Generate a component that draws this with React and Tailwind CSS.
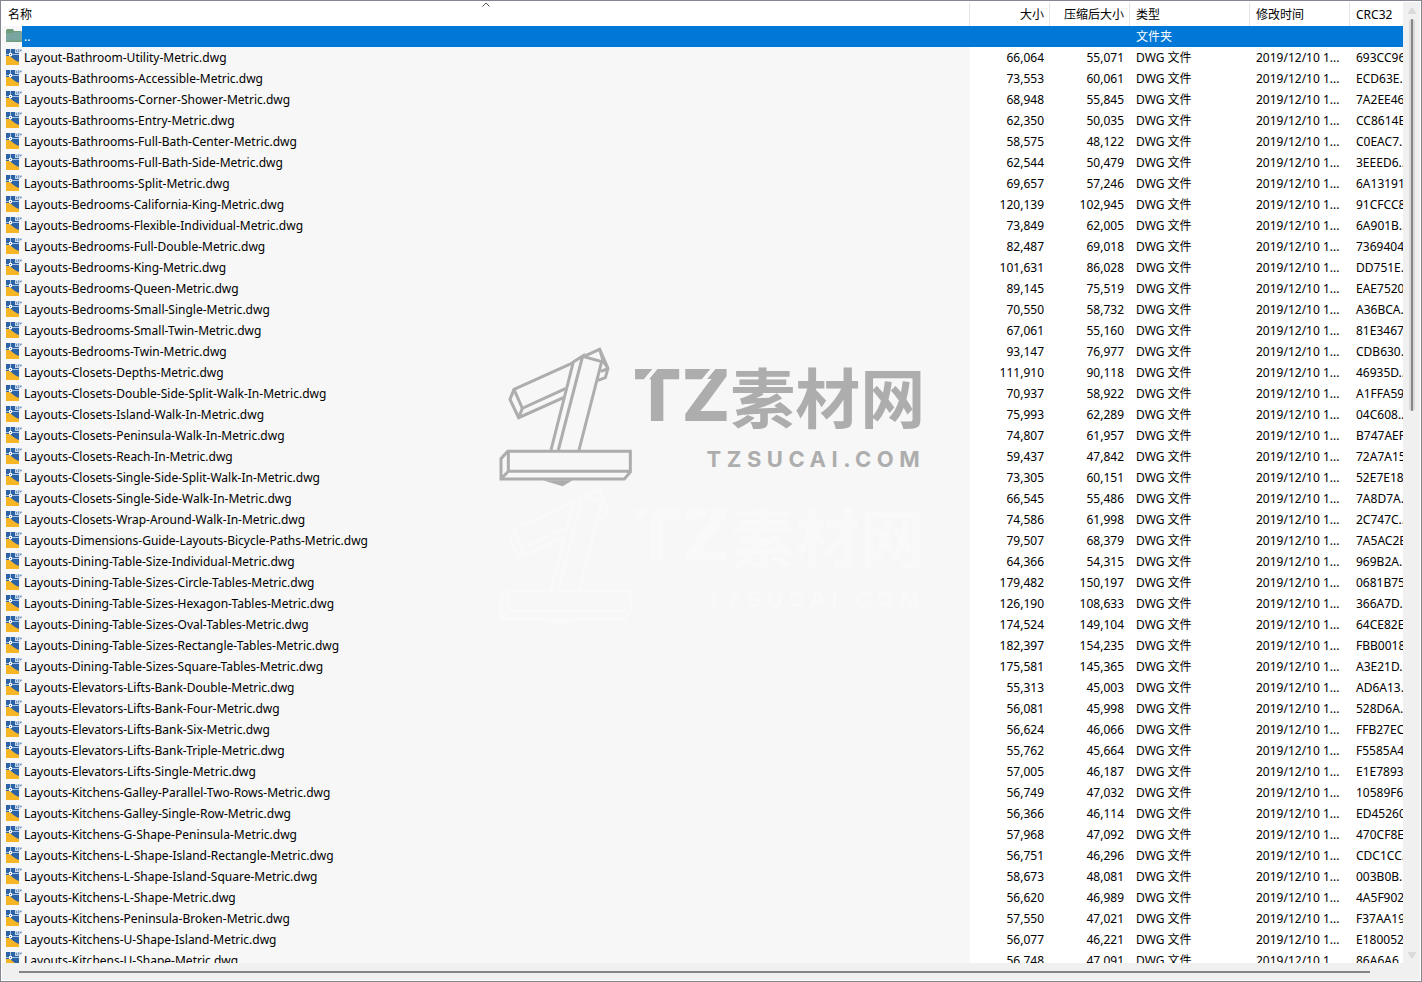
import React from 'react';

const files = [
    ['Layout-Bathroom-Utility-Metric.dwg', '66,064', '55,071', '693CC96...'],
    ['Layouts-Bathrooms-Accessible-Metric.dwg', '73,553', '60,061', 'ECD63E...'],
    ['Layouts-Bathrooms-Corner-Shower-Metric.dwg', '68,948', '55,845', '7A2EE46...'],
    ['Layouts-Bathrooms-Entry-Metric.dwg', '62,350', '50,035', 'CC8614E...'],
    ['Layouts-Bathrooms-Full-Bath-Center-Metric.dwg', '58,575', '48,122', 'C0EAC7...'],
    ['Layouts-Bathrooms-Full-Bath-Side-Metric.dwg', '62,544', '50,479', '3EEED6...'],
    ['Layouts-Bathrooms-Split-Metric.dwg', '69,657', '57,246', '6A13191...'],
    ['Layouts-Bedrooms-California-King-Metric.dwg', '120,139', '102,945', '91CFCC8...'],
    ['Layouts-Bedrooms-Flexible-Individual-Metric.dwg', '73,849', '62,005', '6A901B...'],
    ['Layouts-Bedrooms-Full-Double-Metric.dwg', '82,487', '69,018', '7369404...'],
    ['Layouts-Bedrooms-King-Metric.dwg', '101,631', '86,028', 'DD751E...'],
    ['Layouts-Bedrooms-Queen-Metric.dwg', '89,145', '75,519', 'EAE7520...'],
    ['Layouts-Bedrooms-Small-Single-Metric.dwg', '70,550', '58,732', 'A36BCA...'],
    ['Layouts-Bedrooms-Small-Twin-Metric.dwg', '67,061', '55,160', '81E3467...'],
    ['Layouts-Bedrooms-Twin-Metric.dwg', '93,147', '76,977', 'CDB630...'],
    ['Layouts-Closets-Depths-Metric.dwg', '111,910', '90,118', '46935D...'],
    ['Layouts-Closets-Double-Side-Split-Walk-In-Metric.dwg', '70,937', '58,922', 'A1FFA59...'],
    ['Layouts-Closets-Island-Walk-In-Metric.dwg', '75,993', '62,289', '04C608...'],
    ['Layouts-Closets-Peninsula-Walk-In-Metric.dwg', '74,807', '61,957', 'B747AEF...'],
    ['Layouts-Closets-Reach-In-Metric.dwg', '59,437', '47,842', '72A7A15...'],
    ['Layouts-Closets-Single-Side-Split-Walk-In-Metric.dwg', '73,305', '60,151', '52E7E18...'],
    ['Layouts-Closets-Single-Side-Walk-In-Metric.dwg', '66,545', '55,486', '7A8D7A...'],
    ['Layouts-Closets-Wrap-Around-Walk-In-Metric.dwg', '74,586', '61,998', '2C747C...'],
    ['Layouts-Dimensions-Guide-Layouts-Bicycle-Paths-Metric.dwg', '79,507', '68,379', '7A5AC2E...'],
    ['Layouts-Dining-Table-Size-Individual-Metric.dwg', '64,366', '54,315', '969B2A...'],
    ['Layouts-Dining-Table-Sizes-Circle-Tables-Metric.dwg', '179,482', '150,197', '0681B75...'],
    ['Layouts-Dining-Table-Sizes-Hexagon-Tables-Metric.dwg', '126,190', '108,633', '366A7D...'],
    ['Layouts-Dining-Table-Sizes-Oval-Tables-Metric.dwg', '174,524', '149,104', '64CE82E...'],
    ['Layouts-Dining-Table-Sizes-Rectangle-Tables-Metric.dwg', '182,397', '154,235', 'FBB0018...'],
    ['Layouts-Dining-Table-Sizes-Square-Tables-Metric.dwg', '175,581', '145,365', 'A3E21D...'],
    ['Layouts-Elevators-Lifts-Bank-Double-Metric.dwg', '55,313', '45,003', 'AD6A13...'],
    ['Layouts-Elevators-Lifts-Bank-Four-Metric.dwg', '56,081', '45,998', '528D6A...'],
    ['Layouts-Elevators-Lifts-Bank-Six-Metric.dwg', '56,624', '46,066', 'FFB27EC...'],
    ['Layouts-Elevators-Lifts-Bank-Triple-Metric.dwg', '55,762', '45,664', 'F5585A4...'],
    ['Layouts-Elevators-Lifts-Single-Metric.dwg', '57,005', '46,187', 'E1E7893...'],
    ['Layouts-Kitchens-Galley-Parallel-Two-Rows-Metric.dwg', '56,749', '47,032', '10589F6...'],
    ['Layouts-Kitchens-Galley-Single-Row-Metric.dwg', '56,366', '46,114', 'ED45260...'],
    ['Layouts-Kitchens-G-Shape-Peninsula-Metric.dwg', '57,968', '47,092', '470CF8E...'],
    ['Layouts-Kitchens-L-Shape-Island-Rectangle-Metric.dwg', '56,751', '46,296', 'CDC1CC...'],
    ['Layouts-Kitchens-L-Shape-Island-Square-Metric.dwg', '58,673', '48,081', '003B0B...'],
    ['Layouts-Kitchens-L-Shape-Metric.dwg', '56,620', '46,989', '4A5F902...'],
    ['Layouts-Kitchens-Peninsula-Broken-Metric.dwg', '57,550', '47,021', 'F37AA19...'],
    ['Layouts-Kitchens-U-Shape-Island-Metric.dwg', '56,077', '46,221', 'E180052...'],
    ['Layouts-Kitchens-U-Shape-Metric.dwg', '56,748', '47,091', '86A6A6...'],
];

const FolderIcon = () => (
    <svg className="h-[17px] w-4 shrink-0" viewBox="0 0 16 17" aria-hidden="true">
        <path d="M0 2.5 L1 1 H7 L8 3 H15 L16 4 V13 L15 14 H1 L0 13 Z" fill="#6f9d7c" />
        <path d="M0 5 H7 L8.5 4 H16 V13 L15 14 H1 L0 13 Z" fill="#79a5a0" />
        <path d="M0 12.5 H16 V13 L15 14 H1 L0 13 Z" fill="#6f9d7c" />
    </svg>
);

const DwgIcon = () => (
    <svg className="h-[17px] w-4 shrink-0" viewBox="0 0 16 17" aria-hidden="true">
        <rect width="13" height="16" fill="#2c62a6" />
        <path d="M0 7 H4 C6 9 9 11.5 13 13 V16 H0 Z" fill="#f6b524" />
        <path d="M0 5.5 H3.5 M5.5 5.5 H13 M4.5 0 V4.5 M4.5 6.5 V8" stroke="#a9c4e2" strokeWidth="1" fill="none" />
        <path d="M3 4.5 H6 M3 6.5 H6 M3.5 5 V6 M5.5 5 V6" stroke="#ffffff" strokeWidth="1" fill="none" />
        <path d="M9 0 H16 V2 L13 4 H9 Z" fill="#c3d4e8" />
        <path d="M10.5 1 V3 M12.5 0.5 V3 M14 1.5 H15.5" stroke="#6f93c0" strokeWidth="1" fill="none" />
    </svg>
);

const Watermark = ({ className }) => (
    <div className={`flex h-[140px] items-start ${className}`}>
        <svg className="h-[140px] w-[134px] shrink-0" viewBox="27 38 402 420" fill="none" stroke="currentColor" strokeWidth="9" aria-hidden="true">
            <path d="M53 351 H421 V413 L403 434 H33 V373 Z M55 351 V411 H421 M33 434 L55 411" />
            <path d="M158 438 H248 L218 456 Z" fill="currentColor" stroke="none" />
            <path d="M183 347 L250 83 L278 65 L205 347 M267 347 L335 82 L278 66" />
            <path d="M282 66 L329 45 L354 102 L346 130 L324 138 M329 45 L340 82 L354 102 M332 111 L352 104" />
            <path d="M250 85 L72 165 L60 195 L86 250 L222 189 M72 165 L97 222 L228 162 M97 222 L86 250 M60 195 L72 165" />
        </svg>
        <div className="flex flex-col items-end font-bold">
            <div className="flex h-24 items-center whitespace-nowrap">
                <span className="relative font-['Inter',sans-serif] text-[72px] leading-none font-extrabold">
                    TZ
                    {/* slanted cuts through the top bars */}
                    <svg className="absolute inset-0 h-full w-full" viewBox="0 0 96 72" preserveAspectRatio="none" aria-hidden="true">
                        <path d="M24 7 L11 23 M81 7 L68 23" stroke="#f7f7f7" strokeWidth="4" />
                    </svg>
                </span>
                <span className="font-['Noto_Sans_CJK_SC',sans-serif] text-[65px] leading-none">素材网</span>
            </div>
            <div className="font-['Inter',sans-serif] text-[22px] leading-8 tracking-[0.25em]">TZSUCAI.COM</div>
        </div>
    </div>
);

const HeaderCell = ({ children, right, last }) => (
    <th scope="col" className={`relative h-6 p-0 font-normal ${last ? '' : 'border-r border-[#e5e5e5]'}`}>
        <button type="button" className={`block w-full px-1.5 whitespace-nowrap ${right ? 'pr-[5px] text-right' : 'text-left'}`}>
            {children}
        </button>
    </th>
);

const VerticalScrollbar = () => (
    <div className="flex w-[17px] shrink-0 flex-col items-center bg-[#f0f0f0]">
        <svg className="h-[17px] w-[17px] shrink-0" viewBox="0 0 17 17" aria-hidden="true">
            <path d="M8 6 H10 L13 11 V12 H5 V11 Z" fill="#dadada" />
        </svg>
        <div className="w-1.5 flex-1">
            <div className="flex h-11/26 justify-center rounded-full bg-[#d9d9d9]">
                <div className="w-0.5 rounded-full bg-[#858585]"></div>
            </div>
        </div>
        <svg className="h-[17px] w-[17px] shrink-0" viewBox="0 0 17 17" aria-hidden="true">
            <path d="M5 6 H13 V7 L10 12 H8 L5 7 Z" fill="#dadada" />
        </svg>
    </div>
);

const FileTable = () => (
    <table className="w-full table-fixed border-separate border-spacing-0">
        <colgroup>
            <col />
            <col className="w-20" />
            <col className="w-20" />
            <col className="w-[120px]" />
            <col className="w-[100px]" />
            <col className="w-[53px]" />
        </colgroup>
        <thead>
            <tr>
                <HeaderCell>
                    名称
                    <svg className="absolute top-0 left-1/2 h-[5px] w-[9px] -translate-x-1/2" viewBox="0 0 9 5" aria-hidden="true">
                        <path d="M1 4.5 L4.5 1 L8 4.5" fill="none" stroke="#555555" />
                    </svg>
                </HeaderCell>
                <HeaderCell right>大小</HeaderCell>
                <HeaderCell right>压缩后大小</HeaderCell>
                <HeaderCell>类型</HeaderCell>
                <HeaderCell>修改时间</HeaderCell>
                <HeaderCell last>CRC32</HeaderCell>
            </tr>
        </thead>
        <tbody>
            <tr className="bg-[#0078d7] text-white">
                <td className="bg-[#f7f7f7] p-0 pl-1">
                    <div className="flex h-[21px] items-center">
                        <FolderIcon />
                        <span className="flex-1 bg-[#0078d7] pl-0.5">..</span>
                    </div>
                </td>
                <td></td>
                <td></td>
                <td className="px-1.5 py-0">文件夹</td>
                <td></td>
                <td></td>
            </tr>
            {files.map(([name, size, packed, crc]) => (
                <tr key={name} className="whitespace-nowrap">
                    <td className="bg-[#f7f7f7] p-0 pl-1">
                        <div className="flex h-[21px] items-center gap-0.5">
                            <DwgIcon />
                            <span>{name}</span>
                        </div>
                    </td>
                    <td className="px-1.5 py-0 text-right">{size}</td>
                    <td className="px-1.5 py-0 text-right">{packed}</td>
                    <td className="px-1.5 py-0">DWG 文件</td>
                    <td className="px-1.5 py-0">2019/12/10 1...</td>
                    <td className="overflow-hidden py-0 pr-0 pl-1.5">{crc}</td>
                </tr>
            ))}
        </tbody>
    </table>
);

const App = () => {
    return (
        <div className="relative flex h-screen flex-col overflow-hidden border border-[#828790] bg-white p-px font-['Noto_Sans','Noto_Sans_CJK_SC',sans-serif] text-xs leading-[21px] text-black">
            <div className="flex min-h-0 flex-1">
                <div className="min-w-0 flex-1 overflow-hidden">
                    <FileTable />
                </div>
                <VerticalScrollbar />
            </div>

            <div className="flex h-[17px] shrink-0 items-center bg-[#f0f0f0] pr-[50px] pl-[17px]">
                <div className="h-0.5 flex-1 bg-[#858585]"></div>
            </div>

            {/* watermark over the list */}
            <div className="pointer-events-none absolute inset-0 flex flex-col items-center justify-center pb-2 pl-0.5">
                <Watermark className="text-[#adadad]" />
                <Watermark className="text-white opacity-30" />
            </div>
        </div>
    );
};

export default App;
